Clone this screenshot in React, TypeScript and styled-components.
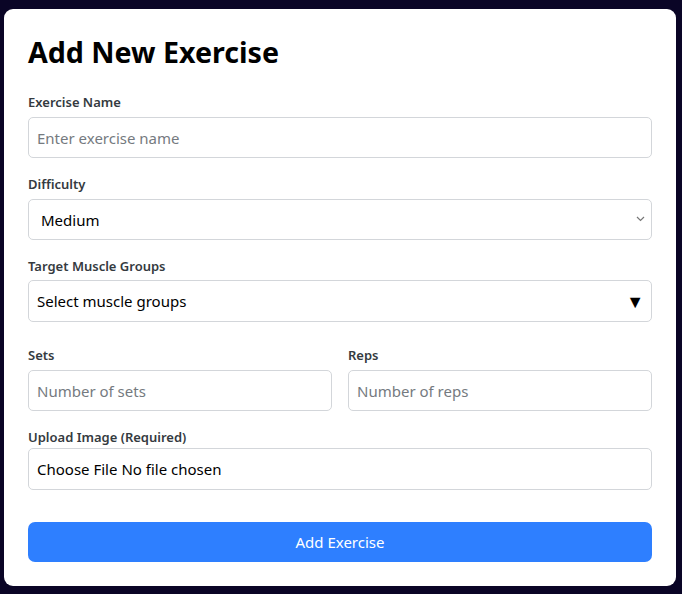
import { createGlobalStyle } from 'styled-components';
import styled from 'styled-components';

const GlobalStyle = createGlobalStyle`
    html, body {
        margin: 0;
        padding: 0;
        background: #0a0526;
        font-family: "Noto Sans", "Liberation Sans", sans-serif;
    }
    * {
        box-sizing: border-box;
    }
`;

const Page = styled.div`
    min-height: 594px;
    padding: 9px 6px 9px 4px;
`;

const Card = styled.form`
    width: 672px;
    background: #ffffff;
    border-radius: 9px;
    padding: 26px 24px 24px;
    display: flex;
    flex-direction: column;
`;

const Title = styled.h2`
    margin: 0 0 24px;
    font-size: 28.6px;
    line-height: 34px;
    font-weight: 700;
    color: #000;
`;

const Field = styled.div<{ $gap?: number }>`
    display: flex;
    flex-direction: column;
    gap: ${p => p.$gap ?? 6}px;
    margin-bottom: 17px;
`;

const Row = styled.div`
    display: grid;
    grid-template-columns: 1fr 1fr;
    gap: 16px;
    margin-top: 7px;
`;

const Label = styled.label`
    font-size: 13px;
    line-height: 18px;
    font-weight: 600;
    color: #343a40;
`;

const TextInput = styled.input`
    width: 100%;
    height: 41px;
    padding: 0 8px;
    border: 1px solid #d3d6da;
    border-radius: 5px;
    font: inherit;
    font-size: 15px;
    color: #000;
    outline: none;
    &::placeholder {
        color: #757a80;
    }
`;

const SelectWrap = styled.div`
    position: relative;
`;

const Select = styled.select`
    width: 100%;
    height: 41px;
    padding: 0 30px 0 12px;
    border: 1px solid #d3d6da;
    border-radius: 5px;
    background: #fff;
    appearance: none;
    font: inherit;
    font-size: 15px;
    color: #000;
    outline: none;
`;

const Chevron = styled.svg`
    position: absolute;
    right: 7px;
    top: 17px;
    pointer-events: none;
`;

const Dropdown = styled.div`
    height: 42px;
    padding: 0 7px 0 8px;
    border: 1px solid #d3d6da;
    border-radius: 5px;
    display: flex;
    align-items: center;
    justify-content: space-between;
    font-size: 15px;
    color: #000;
    cursor: pointer;
`;

const Caret = styled.span`
    font-size: 18px;
    line-height: 1;
    color: #000;
`;

const FileInput = styled.input`
    width: 100%;
    height: 42px;
    padding: 0 8px;
    border: 1px solid #d3d6da;
    border-radius: 5px;
    font: inherit;
    font-size: 15px;
    color: #000;
    line-height: 40px;
    &::file-selector-button {
        border: none;
        background: none;
        padding: 0;
        margin: 0 4px 0 0;
        font: inherit;
        color: #000;
    }
`;

const SubmitButton = styled.button`
    margin-top: 15px;
    height: 40px;
    border: none;
    border-radius: 7px;
    background: #2e7fff;
    color: #fff;
    font: inherit;
    font-size: 15px;
    cursor: pointer;
`;

export default function App() {
    return (
        <Page>
            <GlobalStyle />
            <Card onSubmit={e => e.preventDefault()}>
                <Title>Add New Exercise</Title>

                <Field>
                    <Label>Exercise Name</Label>
                    <TextInput placeholder="Enter exercise name" />
                </Field>

                <Field>
                    <Label>Difficulty</Label>
                    <SelectWrap>
                        <Select defaultValue="medium">
                            <option value="easy">Easy</option>
                            <option value="medium">Medium</option>
                            <option value="hard">Hard</option>
                        </Select>
                        <Chevron width="9" height="6" viewBox="0 0 9 6">
                            <path d="M1 1l3.5 3.5L8 1" fill="none" stroke="#777" strokeWidth="1.2" />
                        </Chevron>
                    </SelectWrap>
                </Field>

                <Field $gap={5}>
                    <Label>Target Muscle Groups</Label>
                    <Dropdown>
                        <span>Select muscle groups</span>
                        <Caret>▼</Caret>
                    </Dropdown>
                </Field>

                <Row>
                    <Field>
                        <Label>Sets</Label>
                        <TextInput placeholder="Number of sets" />
                    </Field>
                    <Field>
                        <Label>Reps</Label>
                        <TextInput placeholder="Number of reps" />
                    </Field>
                </Row>

                <Field $gap={2}>
                    <Label>Upload Image (Required)</Label>
                    <FileInput type="file" accept="image/*" />
                </Field>

                <SubmitButton type="submit">Add Exercise</SubmitButton>
            </Card>
        </Page>
    );
}
